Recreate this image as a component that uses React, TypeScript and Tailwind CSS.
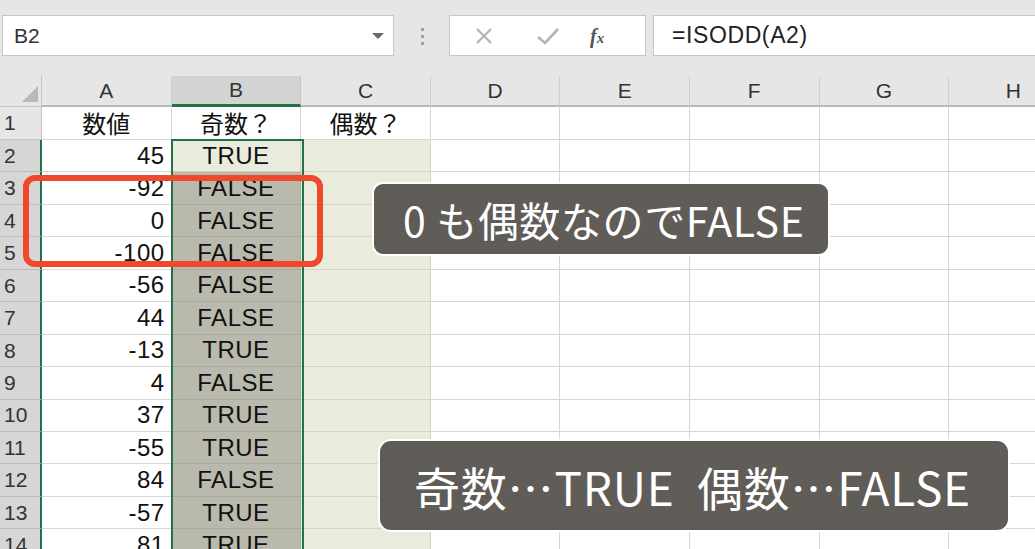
import React from "react";

const COLS = ["A", "B", "C", "D", "E", "F", "G", "H"];
const NUMS = ["45", "-92", "0", "-100", "-56", "44", "-13", "4", "37", "-55", "84", "-57", "81"];
const BOOLS = ["TRUE", "FALSE", "FALSE", "FALSE", "FALSE", "FALSE", "TRUE", "FALSE", "TRUE", "TRUE", "FALSE", "TRUE", "TRUE"];

const cellFont = { fontFamily: '"Liberation Sans", "Noto Sans CJK JP", sans-serif' };
const jpFont = { fontFamily: '"Noto Sans CJK JP", "Noto Sans", sans-serif' };

function TopBar() {
  return (
    <div className="flex h-[76px] items-start bg-[#e6e6e6] pt-[15px]">
      <div className="relative ml-[2px] flex h-[41px] w-[392px] items-center border border-[#c6c6c6] bg-white">
        <span className="pl-[11px] text-[21px] text-[#333]" style={cellFont}>B2</span>
        <svg className="absolute left-[368px] top-[16px]" width="14" height="8" viewBox="0 0 14 8">
          <polygon points="1,1 13,1 7,7" fill="#6a6a6a" />
        </svg>
      </div>
      <div className="ml-[27px] mt-[13px] flex flex-col gap-[4px]">
        <div className="h-[3px] w-[3px] bg-[#a0a0a0]" />
        <div className="h-[3px] w-[3px] bg-[#a0a0a0]" />
        <div className="h-[3px] w-[3px] bg-[#a0a0a0]" />
      </div>
      <div className="ml-[25px] flex h-[41px] w-[197px] items-center border border-[#c6c6c6] bg-white">
        <svg className="ml-[24px]" width="20" height="20" viewBox="0 0 20 20">
          <path d="M3 3 L17 17 M17 3 L3 17" stroke="#b4b4b4" strokeWidth="2.2" fill="none" />
        </svg>
        <svg className="ml-[42px]" width="24" height="20" viewBox="0 0 24 20">
          <path d="M2 11 L9 17 L22 3" stroke="#b4b4b4" strokeWidth="2.6" fill="none" />
        </svg>
        <span className="ml-[30px] text-[20px] italic font-bold text-[#555]" style={{ fontFamily: '"Liberation Serif", serif' }}>
          f<span className="text-[15px]">x</span>
        </span>
      </div>
      <div className="ml-[7px] flex h-[41px] flex-1 items-center border border-r-0 border-[#c6c6c6] bg-white">
        <span className="pl-[18px] text-[23px] tracking-[0.6px] text-[#222]" style={cellFont}>=ISODD(A2)</span>
      </div>
    </div>
  );
}

function HeaderRow() {
  return (
    <div className="flex h-[31px] bg-[#e6e6e6]">
      <div className="relative w-[42px] shrink-0 border-r border-b border-[#c4c4c4]">
        <svg className="absolute left-[22px] top-[10px]" width="16" height="16" viewBox="0 0 16 16">
          <polygon points="16,0 16,16 0,16" fill="#b9b9b9" />
        </svg>
      </div>
      {COLS.map((c) => (
        <div
          key={c}
          className={
            c === "B"
              ? "flex w-[129.6px] shrink-0 items-center justify-center border-r border-b-[3px] border-r-[#c4c4c4] border-b-[#217346] bg-[#d3d3d3] text-[21px] text-[#333]"
              : "flex w-[129.6px] shrink-0 items-center justify-center border-r border-b-2 border-r-[#d0d0d0] border-b-[#b8b8b8] text-[21px] text-[#333]"
          }
          style={cellFont}
        >
          {c}
        </div>
      ))}
    </div>
  );
}

function Row({ n }: { n: number }) {
  const selected = n >= 2;
  const idx = n - 2;
  return (
    <div className={n === 1 ? "flex h-[33px]" : "flex h-[32.45px]"}>
      <div
        className={
          selected
            ? "flex w-[42px] shrink-0 items-center border-r-2 border-b border-r-[#217346] border-b-[#bdbdbd] bg-[#d6d6d6] pl-[4px] text-[21px] text-[#333]"
            : "flex w-[42px] shrink-0 items-center border-r border-b border-[#c4c4c4] bg-[#e6e6e6] pl-[4px] text-[21px] text-[#333]"
        }
        style={cellFont}
      >
        {n}
      </div>
      {/* A */}
      <div
        className={
          n === 1
            ? "flex w-[129.6px] shrink-0 items-center justify-center border-r border-b border-[#d6d6d6] bg-white text-[24px] text-[#111]"
            : "flex w-[129.6px] shrink-0 items-center justify-end border-r border-b border-[#d6d6d6] bg-white pr-[6px] text-[24px] tracking-[0.5px] text-[#111]"
        }
        style={n === 1 ? jpFont : cellFont}
      >
        {n === 1 ? "数値" : NUMS[idx]}
      </div>
      {/* B */}
      <div
        className={
          n === 1
            ? "flex w-[129.6px] shrink-0 items-center justify-center border-r border-b border-[#d6d6d6] bg-white text-[24px] text-[#111]"
            : n === 2
            ? "flex w-[129.6px] shrink-0 items-center justify-center border-r border-b border-[#cfd1c4] bg-[#e9ebdd] text-[24px] tracking-[0.5px] text-[#111]"
            : "flex w-[129.6px] shrink-0 items-center justify-center border-r border-b border-[#a9aa9e] bg-[#b9baad] text-[24px] tracking-[0.5px] text-[#111]"
        }
        style={n === 1 ? jpFont : cellFont}
      >
        {n === 1 ? "奇数？" : BOOLS[idx]}
      </div>
      {/* C */}
      <div
        className={
          n === 1
            ? "flex w-[129.6px] shrink-0 items-center justify-center border-r border-b border-[#d6d6d6] bg-white text-[24px] text-[#111]"
            : "flex w-[129.6px] shrink-0 items-center justify-center border-r border-b border-[#d3d5c8] bg-[#e9ebdd] text-[24px] text-[#111]"
        }
        style={jpFont}
      >
        {n === 1 ? "偶数？" : ""}
      </div>
      {["D", "E", "F", "G", "H"].map((c) => (
        <div key={c} className="w-[129.6px] shrink-0 border-r border-b border-[#d6d6d6] bg-white" />
      ))}
    </div>
  );
}

export default function App() {
  const rows = Array.from({ length: 14 }, (_, i) => i + 1);
  return (
    <div className="relative h-[549px] w-[1035px] overflow-hidden bg-white">
      <TopBar />
      <div className="flex flex-col">
        <HeaderRow />
        {rows.map((n) => (
          <Row key={n} n={n} />
        ))}
      </div>

      {/* selection outline B2:B14 */}
      <div className="pointer-events-none absolute left-[171px] top-[139px] h-[420px] w-[133px] border-2 border-[#217346]" />

      {/* red highlight */}
      <div className="pointer-events-none absolute left-[23px] top-[175px] h-[92px] w-[300px] rounded-[12px] border-[6px] border-[#f0482b]" />

      {/* callout 1 */}
      <div
        className="absolute left-[372px] top-[182px] flex h-[74px] w-[458px] items-center rounded-[11px] border-2 border-white bg-[#57534e]/95 pl-[29px] text-[41px] leading-none tracking-[0.6px] text-white"
        style={jpFont}
      >
        0 も偶数なのでFALSE
      </div>

      {/* callout 2 */}
      <div
        className="absolute left-[378px] top-[439px] flex h-[93px] w-[632px] items-center rounded-[13px] border-2 border-white bg-[#57534e]/95 pl-[34px] text-[46px] leading-none tracking-[0.8px] text-white"
        style={jpFont}
      >
        奇数…TRUE&nbsp;&nbsp;偶数…FALSE
      </div>
    </div>
  );
}
